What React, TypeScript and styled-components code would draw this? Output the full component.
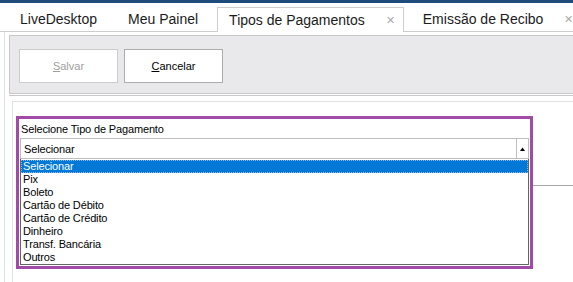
import React from "react";
import styled, { createGlobalStyle } from "styled-components";

const GlobalStyle = createGlobalStyle`
  html, body {
    margin: 0;
    padding: 0;
    background: #ffffff;
    overflow: hidden;
  }
  body {
    width: 573px;
    height: 282px;
    font-family: "Liberation Sans", Arial, sans-serif;
  }
`;

const Screen = styled.div`
  width: 573px;
  height: 282px;
  overflow: hidden;
  background: #ffffff;
`;

const TopBar = styled.div`
  height: 3px;
  background: #1f4a7c;
`;

const TabStrip = styled.div`
  display: flex;
  align-items: flex-end;
  gap: 7px;
  height: 28px;
  padding-left: 8px;
  border-bottom: 1px solid #cdcdcd;
  white-space: nowrap;
`;

const Tab = styled.div<{ $active?: boolean; $closable?: boolean }>`
  display: flex;
  align-items: center;
  flex-shrink: 0;
  box-sizing: border-box;
  height: ${(p) => (p.$active ? "25px" : "24px")};
  padding: 0 ${(p) => (p.$closable ? "8px" : "12px")} 0 ${(p) => (p.$active ? "11px" : "12px")};
  margin-bottom: ${(p) => (p.$active ? "-1px" : "0")};
  font-size: 14px;
  color: #1b1b1b;
  background: #ffffff;
  border: ${(p) => (p.$active ? "1px solid #cdcdcd" : "none")};
  border-bottom: none;
`;

const Close = styled.span`
  margin-left: 21px;
  font-size: 11px;
  color: #ababab;
`;

const Page = styled.div`
  margin-left: 4px;
  padding-top: 3px;
  border-left: 1px solid #dbe2ea;
  height: 250px;
`;

const Toolbar = styled.div`
  display: flex;
  gap: 6px;
  box-sizing: border-box;
  height: 59px;
  margin-left: 4px;
  padding: 13px 0 0 9px;
  background: #e9e8eb;
  border: 1px solid #c8c8c8;
  border-right: none;
`;

const ToolButton = styled.button<{ $disabled?: boolean }>`
  width: 99px;
  height: 34px;
  padding: 0;
  background: #ffffff;
  border: 1px solid ${(p) => (p.$disabled ? "#cccccc" : "#adadad")};
  color: ${(p) => (p.$disabled ? "#a0a0a0" : "#000000")};
  font-family: "Liberation Sans", Arial, sans-serif;
  font-size: 11px;
  u {
    text-decoration: underline;
  }
`;

const Splitter = styled.div`
  margin: 1px 0 0 4px;
  border-top: 1px solid #c8c8c8;
`;

const FormBox = styled.div`
  margin: 5px 0 0 7px;
  padding: 14px 0 0 3px;
  border-top: 1px solid #e2e2e2;
  border-left: 1px solid #e2e2e2;
  height: 200px;
`;

const FieldRow = styled.div`
  display: flex;
  align-items: flex-start;
`;

const Highlight = styled.div`
  width: 510px;
  padding: 4px 0 1px 1px;
  box-sizing: content-box;
  border: 3px solid #a24aa8;
  background: #ffffff;
  font-size: 11px;
  letter-spacing: -0.15px;
  color: #000000;
`;

const HighlightInner = styled.div`
  width: 509px;
`;

const FieldLabel = styled.div`
  line-height: 13px;
  padding-left: 1px;
  margin-bottom: 2px;
`;

const Combo = styled.div`
  display: flex;
  height: 21px;
  box-sizing: border-box;
  border: 1px solid #bdbdbd;
`;

const ComboValue = styled.div`
  flex: 1;
  display: flex;
  align-items: center;
  padding-left: 3px;
`;

const ComboArrow = styled.div`
  width: 11px;
  display: flex;
  align-items: center;
  justify-content: center;
  border-left: 1px solid #bdbdbd;
`;

const DropList = styled.ul`
  list-style: none;
  margin: 0;
  padding: 1px 0 0 0;
  border: 1px solid #646464;
  border-top: none;
`;

const Option = styled.li<{ $selected?: boolean }>`
  height: 13px;
  line-height: 13px;
  padding-left: 2px;
  box-sizing: border-box;
  background: ${(p) => (p.$selected ? "#0078d7" : "transparent")};
  color: ${(p) => (p.$selected ? "#ffffff" : "#000000")};
  outline: ${(p) => (p.$selected ? "1px dotted #8fb8e0" : "none")};
  outline-offset: -1px;
`;

const RightRule = styled.div`
  flex: 1;
  height: 69px;
  border-bottom: 1px solid #a8a8a8;
`;

const options = [
  "Selecionar",
  "Pix",
  "Boleto",
  "Cartão de Débito",
  "Cartão de Crédito",
  "Dinheiro",
  "Transf. Bancária",
  "Outros",
];

const App = () => {
  return (
    <Screen>
      <GlobalStyle />
      <TopBar />
      <TabStrip>
        <Tab>LiveDesktop</Tab>
        <Tab>Meu Painel</Tab>
        <Tab $active $closable>
          Tipos de Pagamentos
          <Close>✕</Close>
        </Tab>
        <Tab $closable>
          Emissão de Recibo
          <Close>✕</Close>
        </Tab>
      </TabStrip>

      <Page>
        <Toolbar>
          <ToolButton $disabled>
            <u>S</u>alvar
          </ToolButton>
          <ToolButton>
            <u>C</u>ancelar
          </ToolButton>
        </Toolbar>
        <Splitter />

        <FormBox>
          <FieldRow>
            <Highlight>
              <HighlightInner>
                <FieldLabel>Selecione Tipo de Pagamento</FieldLabel>
                <Combo>
                  <ComboValue>Selecionar</ComboValue>
                  <ComboArrow>
                    <svg width="5" height="4" viewBox="0 0 5 4">
                      <polygon points="0,4 2.5,0.5 5,4" fill="#000" />
                    </svg>
                  </ComboArrow>
                </Combo>
                <DropList>
                  {options.map((o, i) => (
                    <Option key={o} $selected={i === 0}>
                      {o}
                    </Option>
                  ))}
                </DropList>
              </HighlightInner>
            </Highlight>
            <RightRule />
          </FieldRow>
        </FormBox>
      </Page>
    </Screen>
  );
};

export default App;
